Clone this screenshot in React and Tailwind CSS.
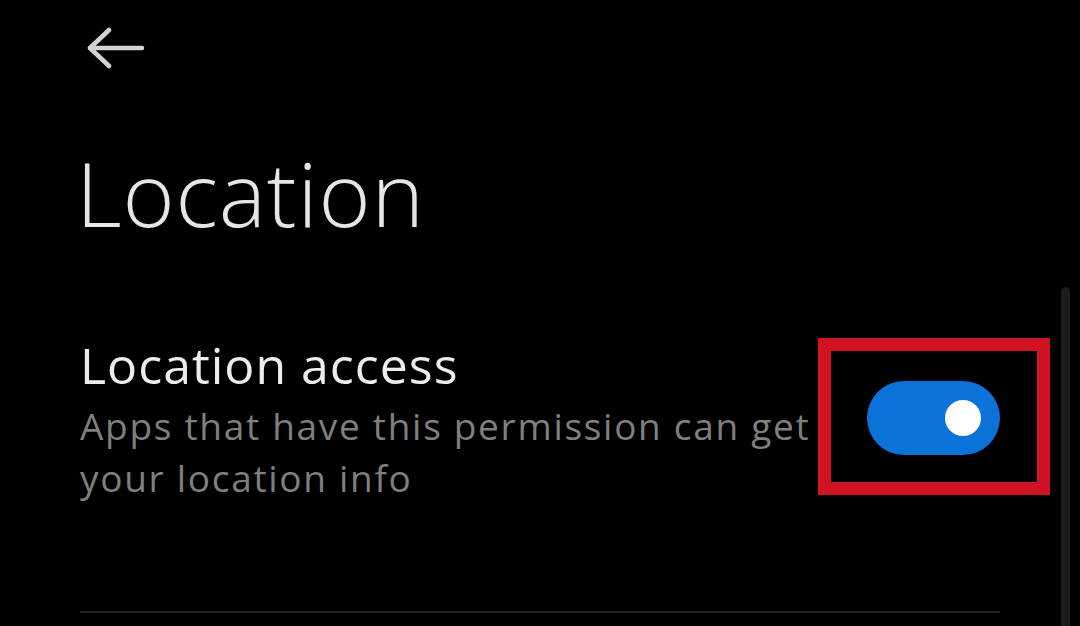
import React from 'react';

const App = () => {
  return (
    <div className="relative w-[1080px] h-[626px] overflow-hidden bg-black font-['Open_Sans','Noto_Sans',sans-serif]">
      {/* Header */}
      <div className="pl-[86px] pt-[27px]">
        <svg width="60" height="42" viewBox="0 0 60 42" fill="none" stroke="#d2d2d2" strokeWidth="4.5" strokeLinecap="round" strokeLinejoin="round">
          <path d="M4 21H56" />
          <path d="M23 3L4 21L23 39" />
        </svg>
      </div>

      <h1 className="ml-[76px] mt-[79px] text-[89px] leading-none font-light tracking-[0.01em] text-[#e6e6e6]">Location</h1>

      {/* Setting row */}
      <div className="mt-[101px] flex items-start pl-[80px] pr-[30px]">
        <div className="flex-1 min-w-0 mt-[2px]">
          <p className="text-[50px] leading-none tracking-[0.02em] text-[#ececec]">Location access</p>
          <p className="mt-[10px] text-[37px] leading-[52px] tracking-[0.046em] text-[#7f7f7f]">
            Apps that have this permission can get your location info
          </p>
        </div>
        <div className="border-[13px] border-[#cf1322] pl-[36px] pr-[37px] pt-[30px] pb-[27px]">
          <div className="relative w-[133px] h-[74px] rounded-full bg-[#0b72d9]">
            <div className="absolute right-[19px] top-[19px] w-[36px] h-[36px] rounded-full bg-white" />
          </div>
        </div>
      </div>

      <div className="mt-[107px] mx-[80px] h-[2px] bg-[#1f1f1f]" />

      {/* Scrollbar */}
      <div className="absolute right-[10px] top-[287px] bottom-0 w-[9px] rounded-t-full bg-[#1c1c1c]" />
    </div>
  );
};

export default App;
